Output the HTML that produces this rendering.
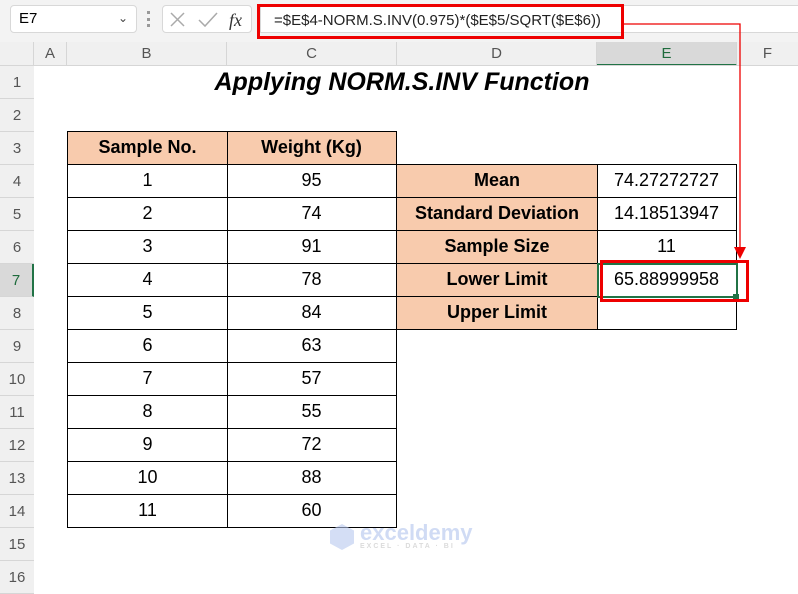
<!DOCTYPE html>
<html><head><style>
*{margin:0;padding:0;box-sizing:border-box}
body{width:798px;height:570px;overflow:hidden;background:#fff;font-family:"Liberation Sans",Calibri,sans-serif;position:relative}
.a{position:absolute}
.rh{position:absolute;left:0;width:34px;height:33px;background:#f0f0f0;border-bottom:1px solid #d6d6d6;color:#555;font-size:15px;text-align:center;line-height:33px}
.ch{position:absolute;top:42px;height:24px;background:#f0f0f0;border-right:1px solid #d6d6d6;color:#555;font-size:15px;text-align:center;line-height:24px}
.c{position:absolute;height:34px;border:1.5px solid #000;font-size:18px;text-align:center;line-height:31px;color:#000;background:#fff}
.h{background:#f8cbad;font-weight:bold}
</style></head><body>
<div class="a" style="left:0;top:0;width:798px;height:42px;background:#f3f3f3"></div>
<div class="a" style="left:10px;top:5px;width:127px;height:28px;background:#fff;border:1px solid #d8d8d8;border-radius:4px;font-size:15px;line-height:26px;padding-left:8px">E7<span style="position:absolute;right:8px;top:-1px;font-size:12px;color:#444">&#8964;</span></div>
<div class="a" style="left:147px;top:11px;width:3px;height:16px;border-left:3px dotted #999"></div>
<div class="a" style="left:162px;top:5px;width:90px;height:28px;background:#fff;border:1px solid #d8d8d8;border-radius:4px"></div>
<svg class="a" style="left:168px;top:10px" width="80" height="20"><path d="M3 3L16 16M16 3L3 16" stroke="#aaa" stroke-width="1.5"/><path d="M31 10L37 16L49 3" stroke="#aaa" stroke-width="1.5" fill="none"/><text x="61" y="16" font-family="Liberation Serif" font-style="italic" font-size="18" fill="#333">fx</text></svg>
<div class="a" style="left:260px;top:5px;width:538px;height:28px;background:#fff;border-top:1px solid #d8d8d8;border-bottom:1px solid #d8d8d8;border-left:1px solid #d8d8d8"></div>
<div class="a" style="left:257px;top:4px;width:367px;height:35px;border:3px solid #e00;font-size:15px;line-height:28px;padding-left:14px;color:#222">=$E$4-NORM.S.INV(0.975)*($E$5/SQRT($E$6))</div>
<div class="a" style="left:0;top:42px;width:34px;height:24px;background:#f0f0f0;border-right:1px solid #d6d6d6"></div>
<div class="ch" style="left:34px;width:33px">A</div>
<div class="ch" style="left:67px;width:160px">B</div>
<div class="ch" style="left:227px;width:170px">C</div>
<div class="ch" style="left:397px;width:200px">D</div>
<div class="ch" style="left:597px;width:140px;background:#d9d9d9;color:#1e6b3c;border-bottom:2px solid #217346">E</div>
<div class="ch" style="left:737px;width:61px;border-right:none">F</div>
<div class="a" style="left:0;top:65px;width:798px;height:1px;background:#d6d6d6"></div>
<div class="a" style="left:33px;top:66px;width:1px;height:504px;background:#d6d6d6"></div>
<div class="rh" style="top:66px">1</div><div class="rh" style="top:99px">2</div><div class="rh" style="top:132px">3</div><div class="rh" style="top:165px">4</div><div class="rh" style="top:198px">5</div><div class="rh" style="top:231px">6</div><div class="rh" style="top:264px;background:#d9d9d9;color:#1e6b3c;border-right:2px solid #217346">7</div><div class="rh" style="top:297px">8</div><div class="rh" style="top:330px">9</div><div class="rh" style="top:363px">10</div><div class="rh" style="top:396px">11</div><div class="rh" style="top:429px">12</div><div class="rh" style="top:462px">13</div><div class="rh" style="top:495px">14</div><div class="rh" style="top:528px">15</div><div class="rh" style="top:561px">16</div>
<div class="a" style="left:67px;top:66px;width:670px;height:33px;text-align:center;font-size:25px;font-weight:bold;font-style:italic;line-height:33px">Applying NORM.S.INV Function</div>
<div class="c h" style="left:67px;top:131px;width:161px">Sample No.</div>
<div class="c h" style="left:226.5px;top:131px;width:170px">Weight (Kg)</div>
<div class="c" style="left:67px;top:164px;width:161px">1</div><div class="c" style="left:226.5px;top:164px;width:170px">95</div>
<div class="c" style="left:67px;top:197px;width:161px">2</div><div class="c" style="left:226.5px;top:197px;width:170px">74</div>
<div class="c" style="left:67px;top:230px;width:161px">3</div><div class="c" style="left:226.5px;top:230px;width:170px">91</div>
<div class="c" style="left:67px;top:263px;width:161px">4</div><div class="c" style="left:226.5px;top:263px;width:170px">78</div>
<div class="c" style="left:67px;top:296px;width:161px">5</div><div class="c" style="left:226.5px;top:296px;width:170px">84</div>
<div class="c" style="left:67px;top:329px;width:161px">6</div><div class="c" style="left:226.5px;top:329px;width:170px">63</div>
<div class="c" style="left:67px;top:362px;width:161px">7</div><div class="c" style="left:226.5px;top:362px;width:170px">57</div>
<div class="c" style="left:67px;top:395px;width:161px">8</div><div class="c" style="left:226.5px;top:395px;width:170px">55</div>
<div class="c" style="left:67px;top:428px;width:161px">9</div><div class="c" style="left:226.5px;top:428px;width:170px">72</div>
<div class="c" style="left:67px;top:461px;width:161px">10</div><div class="c" style="left:226.5px;top:461px;width:170px">88</div>
<div class="c" style="left:67px;top:494px;width:161px">11</div><div class="c" style="left:226.5px;top:494px;width:170px">60</div>
<div class="c h" style="left:396px;top:164px;width:202px">Mean</div><div class="c" style="left:596.5px;top:164px;width:140px">74.27272727</div>
<div class="c h" style="left:396px;top:197px;width:202px">Standard Deviation</div><div class="c" style="left:596.5px;top:197px;width:140px">14.18513947</div>
<div class="c h" style="left:396px;top:230px;width:202px">Sample Size</div><div class="c" style="left:596.5px;top:230px;width:140px">11</div>
<div class="c h" style="left:396px;top:263px;width:202px">Lower Limit</div><div class="c" style="left:596.5px;top:263px;width:140px">65.88999958</div>
<div class="c h" style="left:396px;top:296px;width:202px">Upper Limit</div><div class="c" style="left:596.5px;top:296px;width:140px"></div>
<div class="a" style="left:597px;top:263px;width:141px;height:35px;border:2px solid #217346"></div>
<div class="a" style="left:733px;top:294px;width:6px;height:6px;background:#217346"></div>
<div class="a" style="left:600px;top:260px;width:149px;height:42px;border:3px solid #e00"></div>
<svg class="a" style="left:620px;top:15px" width="130" height="250"><path d="M4 9L120 9L120 235" stroke="#e00" stroke-width="1.3" fill="none"/><path d="M114 232L126 232L120 244Z" fill="#e00"/></svg>
<div class="a" style="left:330px;top:523px;width:140px;height:30px;opacity:.35;color:#7a9be0;font-size:22px;font-weight:bold;padding-left:30px;line-height:20px">exceldemy<div style="font-size:7px;letter-spacing:2px;line-height:8px;color:#999">EXCEL · DATA · BI</div></div>
<div class="a" style="left:330px;top:524px;width:24px;height:26px;background:#b7c8ee;opacity:.6;clip-path:polygon(50% 0,100% 25%,100% 75%,50% 100%,0 75%,0 25%)"></div>
</body></html>
